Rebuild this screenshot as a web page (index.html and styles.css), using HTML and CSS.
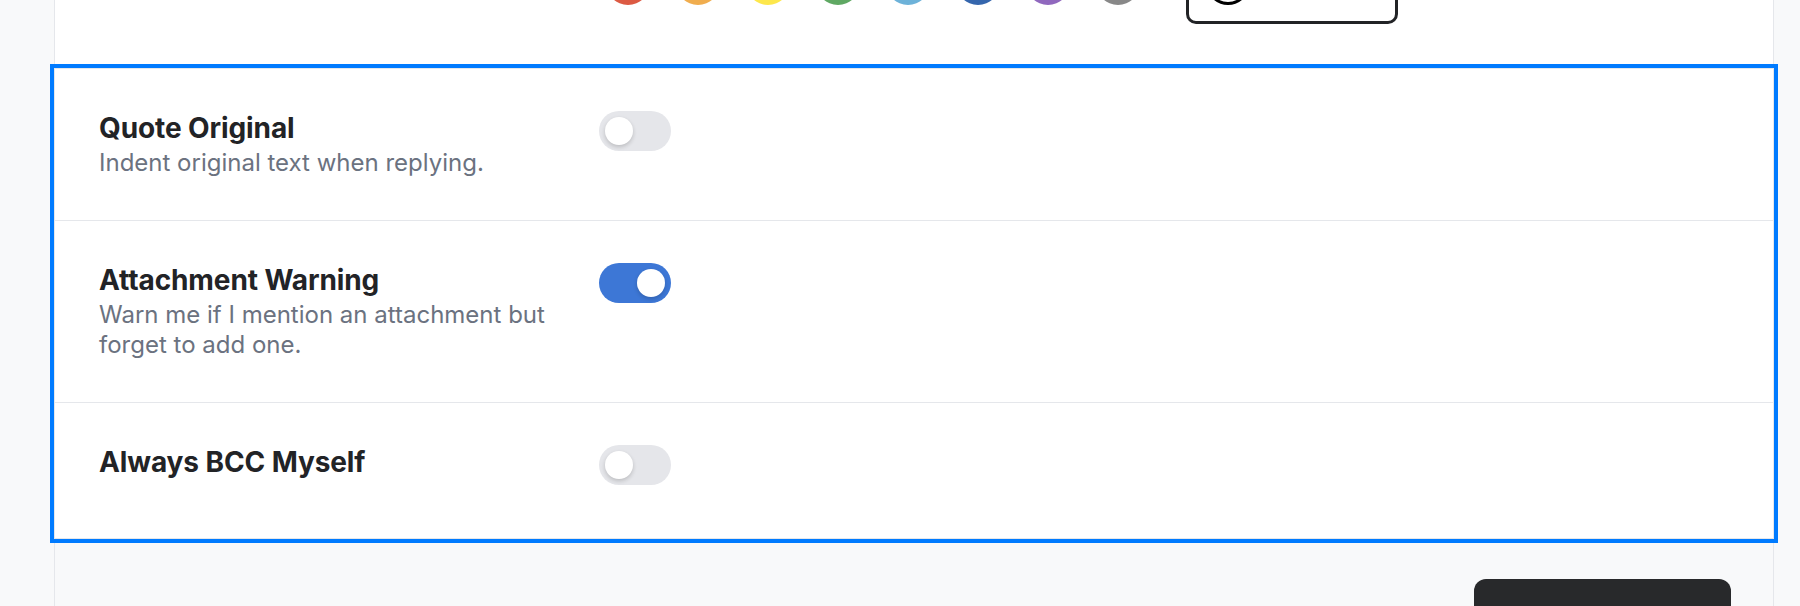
FILE: index.html
```html
<!DOCTYPE html>
<html lang="en">
    <head>
        <meta charset="UTF-8" />
        <meta name="viewport" content="width=device-width, initial-scale=1.0" />
        <title>Compose Settings</title>
        <link rel="stylesheet" href="styles.css">
    </head>
    <body>
        <div class="panel">
            <!-- label colour picker -->
            <div class="setting setting-colors">
                <div class="setting-info"></div>
                <div class="swatches">
                    <button class="swatch"><span class="dot red"></span></button>
                    <button class="swatch"><span class="dot orange"></span></button>
                    <button class="swatch"><span class="dot yellow"></span></button>
                    <button class="swatch"><span class="dot green"></span></button>
                    <button class="swatch"><span class="dot sky"></span></button>
                    <button class="swatch"><span class="dot navy"></span></button>
                    <button class="swatch"><span class="dot purple"></span></button>
                    <button class="swatch"><span class="dot gray"></span></button>
                    <button class="custom"><span class="ring"></span></button>
                </div>
            </div>

            <!-- compose options -->
            <section class="group">
                <div class="setting">
                    <div class="setting-info">
                        <h3>Quote Original</h3>
                        <p>Indent original text when replying.</p>
                    </div>
                    <label class="toggle">
                        <input type="checkbox">
                        <span class="track"></span>
                    </label>
                </div>
                <div class="setting">
                    <div class="setting-info">
                        <h3>Attachment Warning</h3>
                        <p>Warn me if I mention an attachment but forget to add one.</p>
                    </div>
                    <label class="toggle">
                        <input type="checkbox" checked>
                        <span class="track"></span>
                    </label>
                </div>
                <div class="setting">
                    <div class="setting-info">
                        <h3>Always BCC Myself</h3>
                    </div>
                    <label class="toggle">
                        <input type="checkbox">
                        <span class="track"></span>
                    </label>
                </div>
            </section>

            <div class="panel-foot">
                <button class="btn-save"></button>
            </div>
        </div>
    </body>
</html>
```

FILE: styles.css
```css
html,
body {
    margin: 0;
    padding: 0;
}
body {
    height: 606px;
    overflow: hidden;
    padding-left: 54px;
    background: #f8f9fa;
    font-family: Inter, "Noto Sans", sans-serif;
    color: #222326;
}

/* 카드 */
.panel {
    width: 1720px;
    box-sizing: border-box;
    margin-top: -58px;
    background: #fff;
    border-left: 1px solid #e5e7eb;
    border-right: 1px solid #e5e7eb;
}

/* 설정 한줄 */
.setting {
    display: grid;
    grid-template-columns: 460px auto;
    column-gap: 40px;
    align-items: start;
    min-height: 136px;
    box-sizing: border-box;
    padding: 42px 44px;
}
.setting + .setting {
    border-top: 1px solid #e5e7eb;
}
.setting-info h3 {
    margin: 0;
    font-size: 28px;
    line-height: 34px;
    font-weight: 700;
    letter-spacing: -0.1px;
}
.setting-info p {
    margin: 3px 0 0;
    font-size: 24px;
    line-height: 30px;
    color: #6b7280;
}

/* 색상 선택줄 */
.setting-colors {
    min-height: 0;
    padding-top: 0;
    padding-bottom: 44px;
}
.swatches {
    display: flex;
    align-items: center;
    gap: 12px;
}
.swatch {
    width: 58px;
    height: 58px;
    padding: 7px;
    border: 0;
    background: none;
}
.dot {
    display: block;
    width: 44px;
    height: 44px;
    border-radius: 50%;
}
.red { background: #dc5a43; }
.orange { background: #f0ad4e; }
.yellow { background: #fde74c; }
.green { background: #5fa863; }
.sky { background: #6db2d9; }
.navy { background: #3566ad; }
.purple { background: #9068be; }
.gray { background: #888; }

.custom {
    width: 212px;
    height: 82px;
    margin-left: 27px;
    padding: 16px 17px;
    display: flex;
    border: 3px solid #222326;
    border-radius: 10px;
    background: #fff;
}
.ring {
    width: 44px;
    height: 44px;
    box-sizing: border-box;
    border: 3px solid #000;
    border-radius: 50%;
}

/* 선택된 그룹 */
.group {
    margin: 0 -1px;
    border: 1px solid #e5e7eb;
    outline: 4px solid #007bff;
    background: #fff;
}

/* 토글 스위치 */
.toggle {
    display: block;
    width: 72px;
    height: 40px;
    cursor: pointer;
}
.toggle input {
    display: none;
}
.track {
    display: block;
    position: relative;
    width: 72px;
    height: 40px;
    border-radius: 20px;
    background: #e5e6ea;
}
/* 손잡이 */
.track::before {
    content: '';
    position: absolute;
    top: 6px;
    left: 6px;
    width: 28px;
    height: 28px;
    border-radius: 50%;
    background: #fff;
    box-shadow: 0 2px 4px rgba(0, 0, 0, .18);
}
.toggle input:checked + .track {
    background: #3d77d6;
}
.toggle input:checked + .track::before {
    left: 38px;
}

/* 하단 버튼영역 */
.panel-foot {
    display: flex;
    justify-content: flex-end;
    padding: 40px 42px 0;
    height: 120px;
    background: #f8f9fa;
}
.btn-save {
    width: 257px;
    height: 64px;
    border: 0;
    border-radius: 12px;
    background: #28292b;
}
```
